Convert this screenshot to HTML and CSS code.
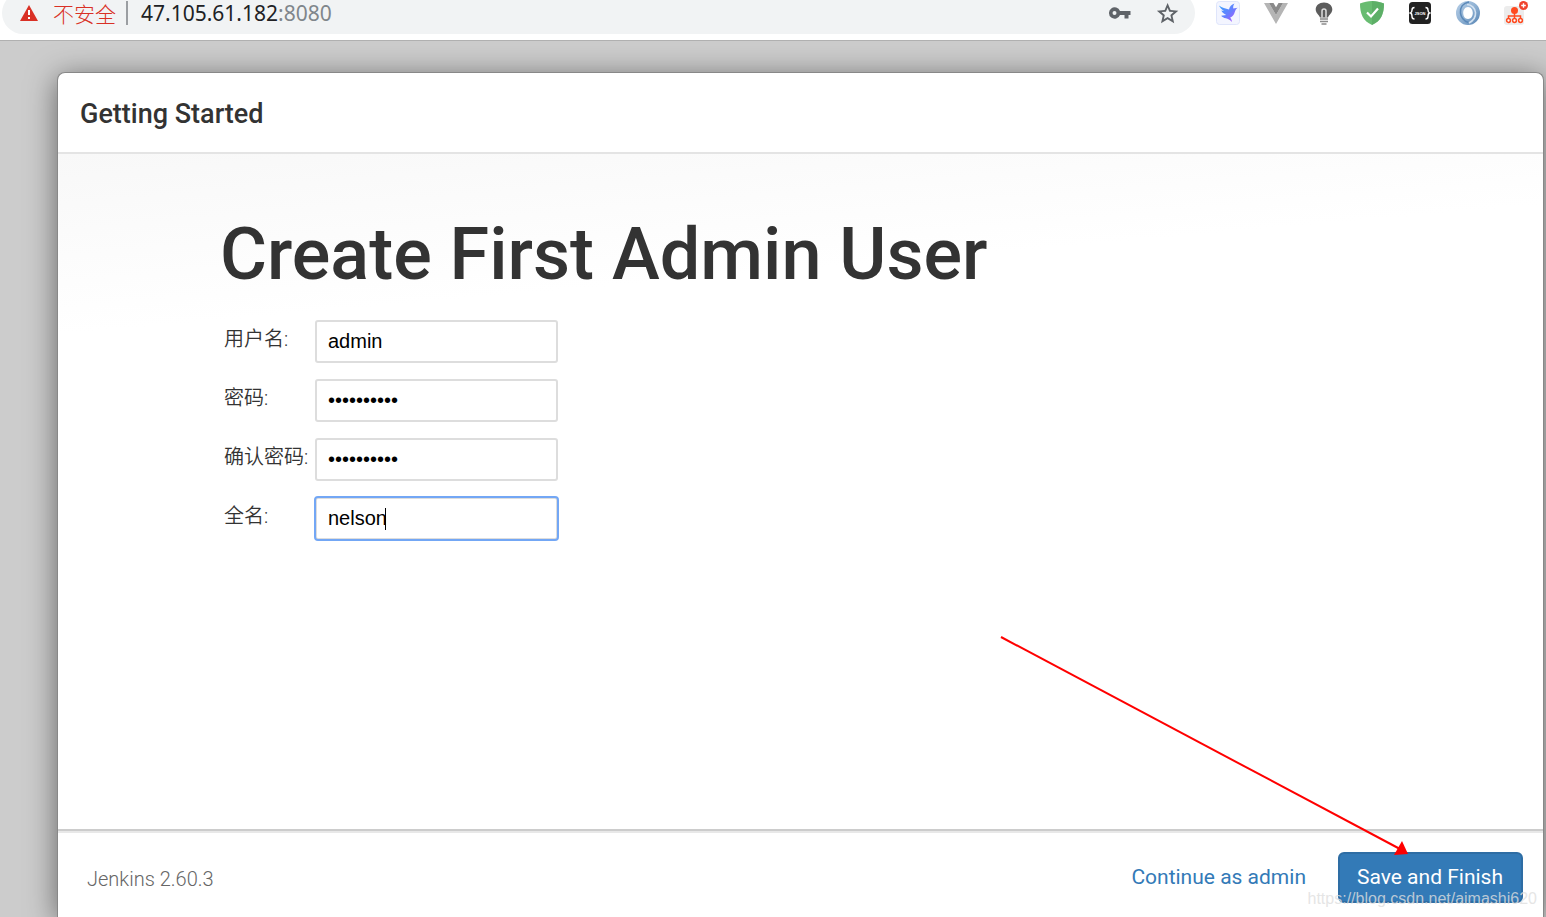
FILE: index.html
```html
<!DOCTYPE html>
<html lang="zh-CN">
<head>
<meta charset="utf-8">
<title>Getting Started</title>
<link rel="stylesheet" href="styles.css">
</head>
<body>
<header class="toolbar">
  <div class="address">
    <svg class="warn" width="18" height="18" viewBox="0 0 18 18" aria-hidden="true"><path d="M9 1 18 17H0z" fill="#d93025"/><path d="M8 6h2v5H8zM8 13h2v2H8z" fill="#fff"/></svg>
    <span class="insecure">不安全</span>
    <span class="divider"></span>
    <span class="url">47.105.61.182<span class="port">:8080</span></span>
    <button class="icon-button" type="button" aria-label="Passwords"><svg width="24" height="24" viewBox="0 0 24 24"><path fill="#5f6368" d="M12 10A5.700 5.700 0 1 0 12 14H16.500v3.500h4V14h2v-4zM6.500 14a2 2 0 1 1 0-4 2 2 0 0 1 0 4z"/></svg></button>
    <button class="icon-button" type="button" aria-label="Bookmark"><svg width="24" height="24" viewBox="0 0 24 24"><path fill="#5f6368" d="M22.300 9.700l-7.700-.65L11.600 2 8.600 9.050.900 9.700l5.830 5.070L5 22.300 11.600 18.300l6.600 4-1.750-7.530zM11.600 16l-3.760 2.270 1-4.280-3.320-2.880 4.380-.38L11.600 6.700l1.710 4.040 4.380.38-3.320 2.880 1 4.280z"/></svg></button>
  </div>
  <nav class="extensions" aria-label="Extensions">
    <button class="icon-button" type="button" aria-label="Bird">
      <svg width="24" height="24" viewBox="0 0 24 24"><defs><linearGradient id="bird" x1="0" y1="0" x2="1" y2="1"><stop offset="0" stop-color="#31a8ff"/><stop offset=".55" stop-color="#6a7cff"/><stop offset="1" stop-color="#c44dff"/></linearGradient></defs><rect x=".5" y=".5" width="23" height="23" rx="3" fill="#f3f5ff" stroke="#dfe5fb"/><path fill="url(#bird)" d="M3 4.500c3 2.300 6.500 3 10 4C13.500 5.500 15.500 3.500 18.500 2.500c-1.200 1.700-1.500 3.300-1.200 5l4.400-.8c-1.500 1-2.300 2.300-2.900 4.300-.8 3-2.300 4.500-4.600 5.500.9 1.200 1.500 2.500 1.800 4.500-2-2.400-4-3.200-6.200-3.700-2.100-.5-3.600-1.300-4.600-2.600l5-.7C7.800 12.800 6.300 11.500 5.300 9.500l2.700.4C5.500 8.500 4 6.700 3 4.500z"/></svg>
    </button>
    <button class="icon-button" type="button" aria-label="Vue">
      <svg width="24" height="24" viewBox="0 0 24 24"><path fill="#b5b5b5" d="M0 2h5l7 12 7-12h5L12 23z"/><path fill="#8a8a8a" d="M5 2h4.500L12 6.300 14.500 2H19l-7 12z"/></svg>
    </button>
    <button class="icon-button" type="button" aria-label="Bulb">
      <svg width="24" height="24" viewBox="0 0 24 24"><path fill="#5c5c5c" d="M12 1.500c-5 0-8.300 3-8.300 6.800 0 4 3.300 5.500 4.300 8.200h8c1-2.700 4.300-4.200 4.300-8.200 0-3.800-3.300-6.800-8.300-6.800z"/><path d="M10 16.500V10a2 2 0 0 1 4 0v6.500" fill="none" stroke="#ddd" stroke-width="1.500"/><path d="M8 18h8M8 20.500h8M9.500 23h5" stroke="#8b8b8b" stroke-width="1.400"/></svg>
    </button>
    <button class="icon-button" type="button" aria-label="Shield">
      <svg width="24" height="24" viewBox="0 0 24 24"><path fill="#68bc71" d="M12 0c4 0 8 1 12 2.500C24 13 21 20 12 24 3 20 0 13 0 2.500 4 1 8 0 12 0z"/><path fill="#57a863" d="M12 0c4 0 8 1 12 2.500C24 13 21 20 12 24z" opacity=".65"/><path d="M7 11.500l4 4 7-8" fill="none" stroke="#fff" stroke-width="2.200"/></svg>
    </button>
    <button class="icon-button" type="button" aria-label="JSON">
      <svg width="24" height="24" viewBox="0 0 24 24"><rect x="1" y="1" width="22" height="22" rx="3.500" fill="#222"/><path d="M6.500 6.500C4.500 6.500 4 7.500 4 9s0 2.500-1.500 3C4 12.500 4 14 4 15.500s.5 2.500 2.500 2.500M17.500 6.500c2 0 2.500 1 2.500 2.500s0 2.500 1.500 3c-1.500.5-1.500 2-1.500 3.500s-.5 2.500-2.500 2.500" fill="none" stroke="#fff" stroke-width="1.400"/><text class="json" x="12" y="13.500" text-anchor="middle">JSON</text></svg>
    </button>
    <button class="icon-button" type="button" aria-label="Swirl">
      <svg width="24" height="24" viewBox="0 0 24 24"><defs><linearGradient id="ring" x1="0" y1="0" x2="1" y2="1"><stop offset="0" stop-color="#b9d0e8"/><stop offset=".5" stop-color="#8fb1d3"/><stop offset="1" stop-color="#5583b3"/></linearGradient></defs><path fill="url(#ring)" fill-rule="evenodd" d="M12 0a12 12 0 1 0 0 24 12 12 0 0 0 0-24zm0 6c3 0 4.800 3 4.800 6s-1.800 6-4.800 6-4.800-3-4.800-6 1.800-6 4.800-6z"/><path fill="none" stroke="#5a88b8" stroke-width="1.600" d="M13 1C7 2 4 6.500 4.500 12c.4 4 3.500 8 8 9.500"/><path fill="none" stroke="#d3e2f1" stroke-width="1.600" d="M11 3.500c4.500 0 8 3.500 8.500 8 .3 4-2 8-6.500 10.500"/></svg>
    </button>
    <button class="icon-button" type="button" aria-label="Tree">
      <svg width="24" height="24" viewBox="0 0 24 24"><rect x="0" y="5" width="20" height="19" rx="3" fill="#ececec"/><circle cx="10.500" cy="9.500" r="3.500" fill="#ff4a1f"/><path d="M10.500 12v6M4.500 18v-3h12v3" fill="none" stroke="#ff4a1f" stroke-width="1.500"/><g fill="#fff" stroke="#ff4a1f" stroke-width="1.500"><circle cx="4.500" cy="19.500" r="1.900"/><circle cx="10.500" cy="19.500" r="1.900"/><circle cx="16.500" cy="19.500" r="1.900"/></g><circle cx="19.500" cy="4.500" r="4.500" fill="#f0432c"/><path d="M19.500 2.200v4.600M17.200 4.500h4.600" stroke="#fff" stroke-width="1.400"/></svg>
    </button>
  </nav>
</header>
<main class="page">
  <section class="dialog">
    <header class="dialog-header"><h2 class="dialog-title">Getting Started</h2></header>
    <div class="dialog-body">
      <h1 class="heading">Create First Admin User</h1>
      <form class="form" id="admin-form">
        <label class="label" for="username">用户名:</label>
        <div class="field"><input class="input" id="username" type="text" value="admin"></div>
        <label class="label" for="password">密码:</label>
        <div class="field"><input class="input" id="password" type="password" value="abcdefghij"></div>
        <label class="label" for="confirm">确认密码:</label>
        <div class="field"><input class="input" id="confirm" type="password" value="abcdefghij"></div>
        <label class="label" for="fullname">全名:</label>
        <div class="field"><input class="input input-active" id="fullname" type="text" value="nelson"><span class="caret"></span></div>
      </form>
    </div>
    <footer class="dialog-footer">
      <span class="version">Jenkins 2.60.3</span>
      <a class="continue" href="#">Continue as admin</a>
      <button class="save" type="submit" form="admin-form">Save and Finish</button>
    </footer>
  </section>
</main>
<svg class="arrow" width="410" height="220" viewBox="0 0 410 220" aria-hidden="true"><path d="M1 1 400 213" stroke="#f00" stroke-width="2"/><path d="M408 218 402 205 394 219z" fill="#f00"/></svg>
<span class="watermark">https://blog.csdn.net/aimashi620</span>
</body>
</html>
```
FILE: styles.css
```css
* { box-sizing: border-box; }

body {
  position: relative;
  display: flex;
  flex-direction: column;
  height: 100vh;
  margin: 0;
  overflow: hidden;
  color: #333;
  background: #ccc;
  font-family: Roboto, "Noto Sans CJK SC", sans-serif;
}

/* Browser toolbar */
.toolbar {
  position: relative;
  z-index: 1;
  display: flex;
  gap: 21px;
  margin-top: -8px;
  padding: 0 18px 6px 2px;
  background: #fff;
  border-bottom: 1px solid #b0b0b0;
}
.address {
  display: flex;
  flex: 1;
  align-items: center;
  height: 42px;
  padding: 0 15px 0 18px;
  border-radius: 21px;
  background: #f1f3f4;
  font-family: "Noto Sans", "Noto Sans CJK SC", sans-serif;
  font-size: 21px;
  line-height: 24px;
}
.insecure {
  margin-left: 15px;
  color: #d93025;
  font-family: "Noto Sans CJK SC", sans-serif;
  font-weight: 300;
}
.divider {
  width: 2px;
  height: 24px;
  margin: 0 13px 0 10px;
  background: #9b9ea2;
}
.url {
  flex: 1;
  color: #202124;
}
.port { color: #80868b; }
.icon-button {
  display: block;
  width: 24px;
  height: 24px;
  padding: 0;
  border: 0;
  background: none;
}
.icon-button + .icon-button { margin-left: 24px; }
.icon-button svg { display: block; }
.extensions {
  display: flex;
  align-items: center;
}
.json {
  fill: #fff;
  font: bold 4px "Liberation Sans", sans-serif;
}

/* Setup dialog */
.page {
  display: flex;
  flex: 1;
  padding: 31px 2px 0 57px;
}
.dialog {
  display: flex;
  flex: 1;
  flex-direction: column;
  border: 1px solid #888;
  border-bottom: 0;
  border-radius: 8px 8px 0 0;
  background: #fff;
  box-shadow: 0 5px 30px rgba(0, 0, 0, .5);
}
.dialog-header {
  padding: 25px 22px 22px;
  border-bottom: 2px solid #e4e4e4;
}
.dialog-title {
  margin: 0;
  font-size: 27px;
  font-weight: 500;
  line-height: 32px;
}
.dialog-body {
  flex: 1;
  padding: 61px 162px 0;
  background: linear-gradient(175deg, #f8f8f8, #fff 180px);
}
.heading {
  margin: 0 0 25px;
  font-size: 72px;
  font-weight: 500;
  line-height: 80px;
}
.form {
  display: grid;
  grid-template-columns: 91px 243px;
  row-gap: 16px;
  padding-left: 4px;
}
.label {
  padding-top: 4px;
  font-size: 20px;
  font-weight: 350;
  line-height: 30px;
  white-space: nowrap;
}
.field { position: relative; }
.input {
  display: block;
  width: 100%;
  height: 43px;
  padding: 0 11px;
  border: 2px solid #ddd;
  border-radius: 3px;
  outline: 0;
  color: #000;
  background: #fff;
  font-family: "Liberation Sans", Arial, sans-serif;
  font-size: 20px;
}
.input-active {
  outline: 2px solid #73a7f5;
  outline-offset: -1px;
}
.caret {
  position: absolute;
  top: 11px;
  left: 70px;
  width: 1px;
  height: 22px;
  background: #000;
}
.dialog-footer {
  display: flex;
  align-items: baseline;
  padding: 21px 20px 14px 29px;
  border-top: 2px solid #ccc;
  box-shadow: inset 0 2px #e8e8e8;
  font-size: 21px;
  line-height: 24px;
}
.version {
  flex: 1;
  padding-top: 2px;
  align-self: center;
  color: #666;
  font-size: 20px;
  font-weight: 300;
}
.continue {
  margin-right: 32px;
  color: #337ab7;
  text-decoration: none;
}
.save {
  height: 51px;
  padding: 0 18px 2px 17px;
  border: 2px solid #2e6da4;
  border-radius: 6px;
  color: #fff;
  background: #337ab7;
  font-family: inherit;
  font-size: 21px;
}

/* Annotations over the page */
.arrow {
  position: absolute;
  z-index: 2;
  right: 136px;
  bottom: 61px;
}
.watermark {
  position: absolute;
  z-index: 2;
  right: 9px;
  bottom: 8px;
  color: rgba(222, 222, 222, .8);
  font-family: "Liberation Sans", Arial, sans-serif;
  font-size: 16px;
  line-height: 20px;
}
```
